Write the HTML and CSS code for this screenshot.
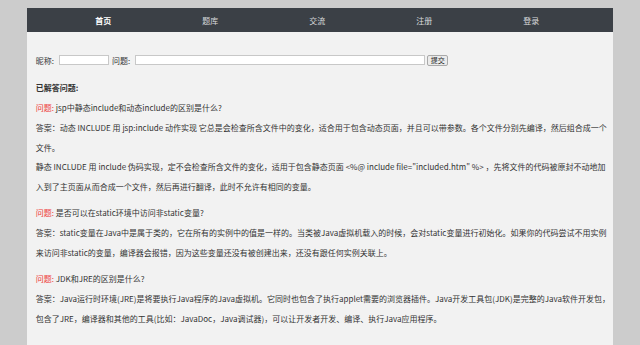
FILE: index.html
```html
<!DOCTYPE html>
<html lang="zh-CN">
<head>
<meta charset="UTF-8">
<title>问答</title>
<link rel="stylesheet" href="styles.css">
</head>
<body>
    <div id="wrap">
        <div id="nav">
            <a href="#" class="active">首页</a>
            <a href="#">题库</a>
            <a href="#">交流</a>
            <a href="#">注册</a>
            <a href="#">登录</a>
        </div>

        <div id="main">
            <form class="ask-form">
                <label>昵称:</label>
                <input type="text" class="name-input">
                <label>问题:</label>
                <input type="text" class="question-input">
                <button type="button">提交</button>
            </form>

            <div class="title">已解答问题:</div>

            <div class="qa">
                <p class="q"><span class="tag">问题:</span> jsp中静态include和动态include的区别是什么?</p>
                <p class="a">答案：动态 INCLUDE 用 jsp:include 动作实现 它总是会检查所含文件中的变化，适合用于包含动态页面，并且可以带参数。各个文件分别先编译，然后组合成一个文件。</p>
                <p class="a">静态 INCLUDE 用 include 伪码实现，定不会检查所含文件的变化，适用于包含静态页面 &lt;%@ include file="included.htm" %&gt; ，先将文件的代码被原封不动地加入到了主页面从而合成一个文件，然后再进行翻译，此时不允许有相同的变量。</p>
            </div>

            <div class="qa">
                <p class="q"><span class="tag">问题:</span> 是否可以在static环境中访问非static变量?</p>
                <p class="a">答案：static变量在Java中是属于类的，它在所有的实例中的值是一样的。当类被Java虚拟机载入的时候，会对static变量进行初始化。如果你的代码尝试不用实例来访问非static的变量，编译器会报错，因为这些变量还没有被创建出来，还没有跟任何实例关联上。</p>
            </div>

            <div class="qa">
                <p class="q"><span class="tag">问题:</span> JDK和JRE的区别是什么?</p>
                <p class="a">答案：Java运行时环境(JRE)是将要执行Java程序的Java虚拟机。它同时也包含了执行applet需要的浏览器插件。Java开发工具包(JDK)是完整的Java软件开发包，包含了JRE，编译器和其他的工具(比如：JavaDoc，Java调试器)，可以让开发者开发、编译、执行Java应用程序。</p>
            </div>
        </div>
    </div>
</body>
</html>
```

FILE: styles.css
```css
body {
    font-family: "Noto Sans CJK SC", "Noto Sans", sans-serif;
    background-color: #cccccc;
    margin: 8px;
    color: #333;
    font-size: 8px;
}

#wrap {
    width: 94%;
    margin: 0 auto;
}

#nav {
    display: flex;
    height: 24px;
    align-items: center;
    padding-left: 23px;
    background-color: #3b4046;
}

#nav a {
    width: 107px;
    text-align: center;
    color: #d8dadc;
    text-decoration: none;
    font-size: 8px;
}

#nav a.active {
    color: #fff;
    font-weight: bold;
}

#main {
    background-color: #f2f2f2;
    padding: 20px 3px 40px 9px;
    min-height: 300px;
}

.ask-form {
    display: flex;
    align-items: center;
    height: 16px;
    margin: 0 0 10px 0;
}

.ask-form label {
    margin-right: 5px;
}

.ask-form input {
    height: 10px;
    box-sizing: border-box;
    border: 1px solid #c8c8c8;
    background: #fff;
    padding: 0;
    margin: 0 3px 0 0;
}

.name-input {
    width: 50px;
}

.question-input {
    width: 290px;
}

.ask-form .question-input {
    margin-right: 2px;
}

.ask-form button {
    height: 11px;
    width: 21px;
    padding: 0;
    font-family: inherit;
    font-size: 7px;
    line-height: 9px;
    border: 1px solid #a9a9a9;
    border-radius: 2px;
    background-color: #ebebeb;
    color: #222;
}

.title {
    font-weight: bold;
    line-height: 20px;
}

.qa {
    margin-bottom: 7px;
}

.qa p {
    margin: 0;
}

.qa .q {
    line-height: 20px;
}

.qa .a {
    line-height: 19.5px;
}

.tag {
    color: #ee3b3b;
}
```
